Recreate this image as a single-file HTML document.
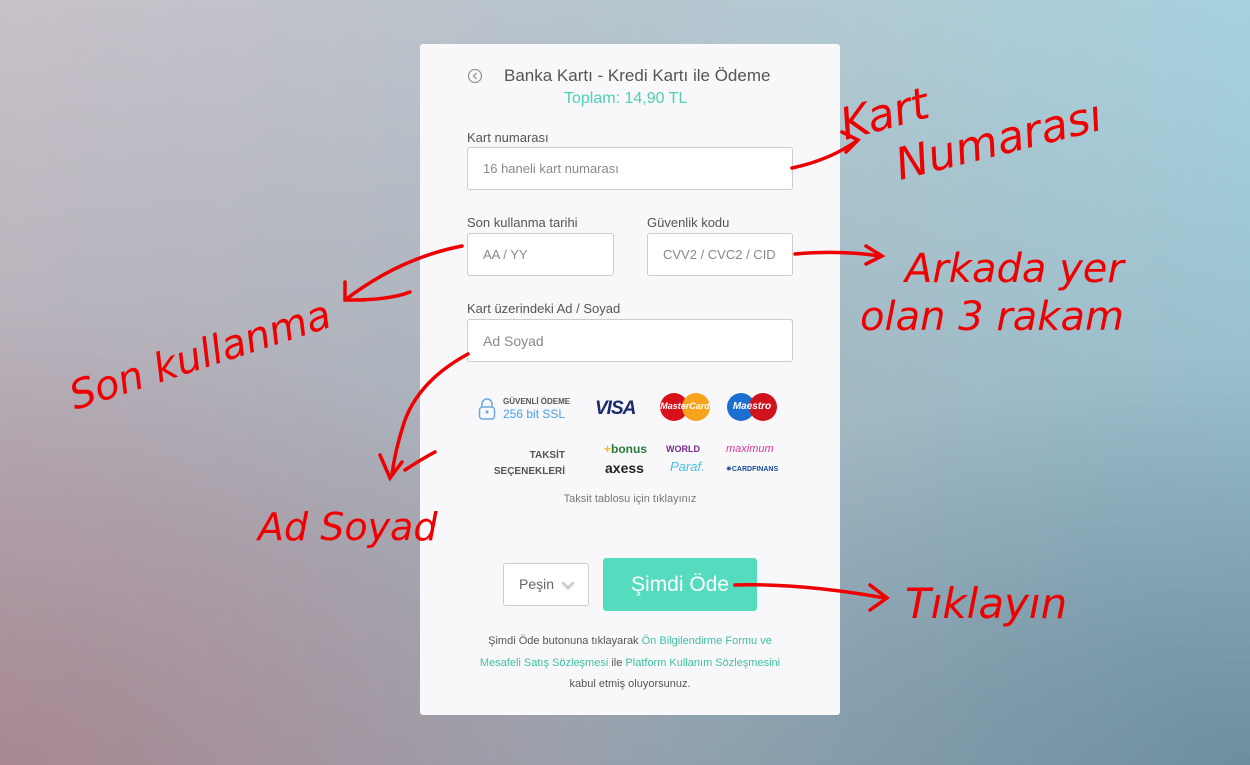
<!DOCTYPE html>
<html><head><meta charset="utf-8"><style>
*{margin:0;padding:0;box-sizing:border-box}
body{width:1250px;height:765px;overflow:hidden;position:relative;font-family:"Liberation Sans",sans-serif;
background:linear-gradient(180deg,rgba(0,0,0,0) 0%,rgba(60,70,90,0.25) 100%),linear-gradient(90deg,#c8c0c8 0%,#b8c4cc 45%,#a6d2de 100%);}
.bl{position:absolute;left:0;top:300px;width:700px;height:465px;background:radial-gradient(ellipse at 0% 100%,rgba(170,120,130,.6),rgba(170,120,130,0) 70%)}
.br{position:absolute;right:0;top:350px;width:700px;height:415px;background:radial-gradient(ellipse at 100% 100%,rgba(90,120,140,.6),rgba(90,120,140,0) 70%)}
.card{position:absolute;left:420px;top:44px;width:420px;height:671px;background:#f8f8fa;border-radius:3px}
.t{position:absolute;color:#555;font-size:17px}
.lab{position:absolute;font-size:13px;color:#555}
.in{position:absolute;border:1px solid #ccc;border-radius:3px;background:#fff;font-size:13px;color:#888;padding-left:15px;display:flex;align-items:center}
.g{color:#3fbfa0}
</style></head><body>
<div class="bl"></div><div class="br"></div>
<div class="card">
 <svg style="position:absolute;left:47px;top:24px" width="16" height="16"><circle cx="8" cy="8" r="6.5" fill="none" stroke="#999" stroke-width="1.3"/><path d="M9.5 5 L6.5 8 L9.5 11" fill="none" stroke="#999" stroke-width="1.3"/></svg>
 <div class="t" style="left:84px;top:22px">Banka Kartı - Kredi Kartı ile Ödeme</div>
 <div class="t g" style="left:144px;top:46px;font-size:16px;color:#4dd0b5">Toplam: 14,90 TL</div>
 <div class="lab" style="left:47px;top:86px">Kart numarası</div>
 <div class="in" style="left:47px;top:103px;width:326px;height:43px">16 haneli kart numarası</div>
 <div class="lab" style="left:47px;top:171px">Son kullanma tarihi</div>
 <div class="in" style="left:47px;top:189px;width:147px;height:43px">AA / YY</div>
 <div class="lab" style="left:227px;top:171px">Güvenlik kodu</div>
 <div class="in" style="left:227px;top:189px;width:146px;height:43px">CVV2 / CVC2 / CID</div>
 <div class="lab" style="left:47px;top:257px">Kart üzerindeki Ad / Soyad</div>
 <div class="in" style="left:47px;top:275px;width:326px;height:43px;font-size:14px">Ad Soyad</div>
 <svg style="position:absolute;left:58px;top:353px" width="18" height="24"><path d="M4 10 V7 a5 5 0 0 1 10 0 V10" fill="none" stroke="#6aa8e6" stroke-width="1.5"/><rect x="1.5" y="10" width="15" height="12" rx="3" fill="none" stroke="#6aa8e6" stroke-width="1.5"/><circle cx="9" cy="15" r="1.5" fill="#6aa8e6"/></svg>
 <div style="position:absolute;left:83px;top:353px;font-size:8px;font-weight:bold;color:#555">GÜVENLİ ÖDEME</div>
 <div style="position:absolute;left:83px;top:363px;font-size:12px;color:#4a9ee6">256 bit SSL</div>
 <div style="position:absolute;left:175px;top:354px;font-size:19px;font-weight:bold;font-style:italic;color:#1a2a6c;letter-spacing:-1px">VISA</div>
 <div style="position:absolute;left:240px;top:349px;width:28px;height:28px;border-radius:50%;background:#d8101a"></div>
 <div style="position:absolute;left:262px;top:349px;width:28px;height:28px;border-radius:50%;background:#f7a31c"></div>
 <div style="position:absolute;left:238px;top:357px;width:54px;text-align:center;font-size:9px;font-weight:bold;font-style:italic;color:#fff">MasterCard</div>
 <div style="position:absolute;left:307px;top:349px;width:28px;height:28px;border-radius:50%;background:#1b6fd0"></div>
 <div style="position:absolute;left:329px;top:349px;width:28px;height:28px;border-radius:50%;background:#d0121c"></div>
 <div style="position:absolute;left:306px;top:357px;width:52px;text-align:center;font-size:10px;font-weight:bold;font-style:italic;color:#fff">Maestro</div>
 <div style="position:absolute;left:60px;top:404px;width:85px;text-align:right;font-size:10px;font-weight:bold;color:#555;line-height:16px">TAKSİT<br>SEÇENEKLERİ</div>
 <div style="position:absolute;left:184px;top:398px;font-size:12px;font-weight:bold;color:#2a7a3a"><span style="color:#f0c000">+</span>bonus</div>
 <div style="position:absolute;left:185px;top:416px;font-size:14px;font-weight:bold;color:#222">axess</div>
 <div style="position:absolute;left:246px;top:400px;font-size:9px;font-weight:bold;color:#7b2a90">WORLD</div>
 <div style="position:absolute;left:250px;top:415px;font-size:13px;font-style:italic;color:#4ac0e0">Paraf.</div>
 <div style="position:absolute;left:306px;top:399px;font-size:11px;font-style:italic;color:#e0359a">maximum</div>
 <div style="position:absolute;left:306px;top:421px;font-size:7px;font-weight:bold;color:#1a4a9a">✷CARDFINANS</div>
 <div style="position:absolute;left:0;width:420px;top:449px;text-align:center;font-size:11px;color:#777">Taksit tablosu için tıklayınız</div>
 <div style="position:absolute;left:83px;top:519px;width:86px;height:43px;border:1px solid #ccc;border-radius:3px;background:#fff;font-size:14px;color:#666;padding-left:15px;line-height:41px">Peşin</div>
 <svg style="position:absolute;left:141px;top:537px" width="14" height="9"><path d="M1.5 1.5 L7 7 L12.5 1.5" fill="none" stroke="#ccc" stroke-width="3"/></svg>
 <div style="position:absolute;left:183px;top:514px;width:154px;height:53px;border-radius:3px;background:#55dcbf;color:#fff;font-size:21px;text-align:center;line-height:53px">Şimdi Öde</div>
 <div style="position:absolute;left:0;width:420px;top:587px;text-align:center;font-size:11px;color:#555;line-height:21.5px">Şimdi Öde butonuna tıklayarak <span class="g">Ön Bilgilendirme Formu ve</span><br><span class="g">Mesafeli Satış Sözleşmesi</span> ile <span class="g">Platform Kullanım Sözleşmesini</span><br>kabul etmiş oluyorsunuz.</div>
</div>
<svg style="position:absolute;left:0;top:0" width="1250" height="765" fill="none" stroke="#ee0000" stroke-width="3.5" stroke-linecap="round">
 <path d="M792 168 Q830 160 858 140 M842 132 L858 140 L846 152"/>
 <path d="M795 254 Q840 250 880 256 M866 246 L882 256 L866 264"/>
 <path d="M462 246 Q400 258 345 300 M345 282 L345 300 L365 300 M350 300 Q390 300 410 292"/>
 <path d="M468 354 Q420 380 405 420 Q395 450 392 475 M380 455 L390 478 L402 462 M405 470 Q420 460 435 452"/>
 <path d="M735 585 Q800 583 885 598 M870 585 L887 598 L870 610"/>
 <g fill="#ee0000" stroke="none" font-family="DejaVu Sans" font-style="italic">
  <text x="845" y="140" font-size="44" transform="rotate(-15 845 140)">Kart</text>
  <text x="900" y="180" font-size="44" transform="rotate(-14 900 180)">Numarası</text>
  <text x="905" y="282" font-size="40">Arkada yer</text>
  <text x="860" y="330" font-size="40">olan 3 rakam</text>
  <text x="75" y="410" font-size="40" transform="rotate(-18 75 410)">Son kullanma</text>
  <text x="258" y="540" font-size="38">Ad Soyad</text>
  <text x="905" y="618" font-size="42">Tıklayın</text>
 </g>
</svg>
</body></html>
